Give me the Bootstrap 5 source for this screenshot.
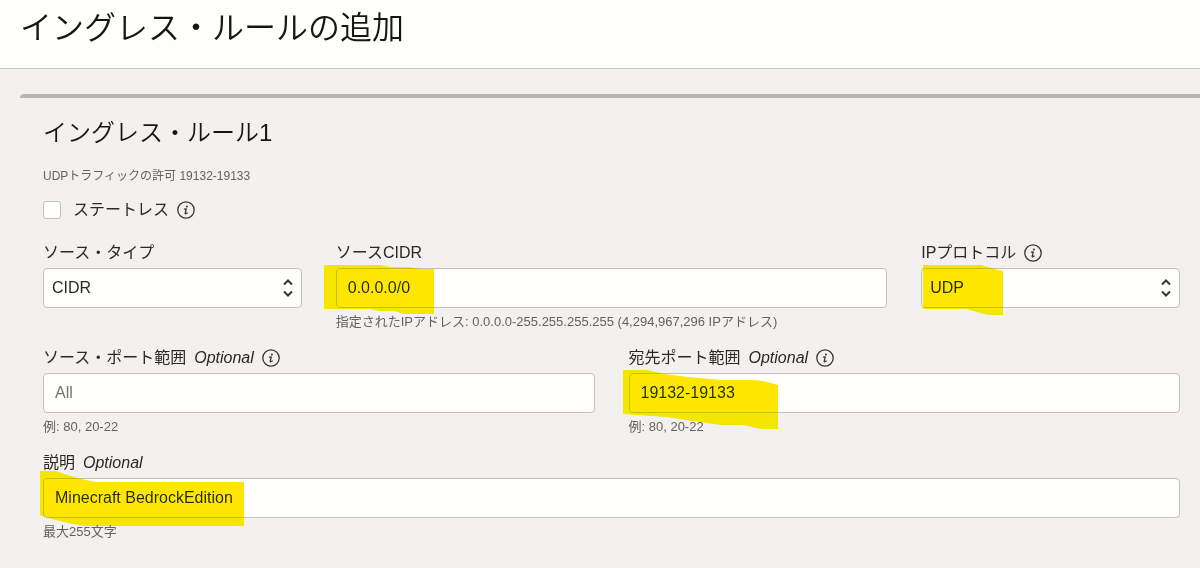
<!DOCTYPE html>
<html lang="ja">
<head>
<meta charset="utf-8">
<meta name="viewport" content="width=device-width, initial-scale=1">
<title>イングレス・ルールの追加</title>
<link href="https://cdn.jsdelivr.net/npm/bootstrap@5.3.0/dist/css/bootstrap.min.css" rel="stylesheet">
<style>
  body { font-family: "Liberation Sans", "Noto Sans CJK JP", sans-serif; font-size: 16px; line-height: 24px; color: #2b2825; background: #f3f1f0; overflow-x: hidden; }
  .page-head { background: #fefefc; border-bottom: 1px solid #c9c6c4; padding: 4px 20px 16px; }
  .page-head h1 { font-size: 32px; line-height: 48px; font-weight: 350; color: #161513; }
  .rule-panel { margin: 25px 0 0 20px; padding: 17px 20px 16px 23px; border-top: 4px solid #bab5b0; border-top-left-radius: 4px; }
  .rule-panel h2 { font-size: 24px; line-height: 36px; font-weight: 350; color: #161513; }
  .hint { font-size: 13px; line-height: 20px; color: #66615d; }
  .rule-summary { font-size: 12px; margin: 15px 0 12px; }
  .rule-row { --bs-gutter-x: 34px; }
  .field-block { margin-bottom: 14px; }
  .field-head { height: 24px; margin-bottom: 3px; }
  .field-block .hint { margin-top: 4px; }
  .optional { font-style: italic; margin-left: 8px; }
  .field-block .form-control, .field-block .form-select { height: 40px; font-size: 16px; line-height: 24px; color: #2b2825; background-color: #fefefc; border: 1px solid #c5c0bc; border-radius: 4px; padding: 7px 11px; }
  .field-block .form-select { padding-left: 8px; background-image: url("data:image/svg+xml,%3Csvg xmlns='http://www.w3.org/2000/svg' viewBox='0 0 12 18'%3E%3Cpath d='M2 5.5l4-4 4 4M2 12.5l4 4 4-4' fill='none' stroke='%233a3632' stroke-width='2'/%3E%3C/svg%3E"); background-size: 12px 18px; background-position: right 7px center; }
  .field-block .form-control::placeholder { color: #77726e; }
  .stateless { margin-bottom: 19px; }
  .stateless .form-check-input { width: 18px; height: 18px; margin: 0; border: 1px solid #c5c0bc; border-radius: 3px; background-color: #fefefc; }
  .info-btn { width: 18px; height: 18px; color: #3a3632; }
  .info-btn svg { display: block; }
  .marker { position: absolute; mix-blend-mode: darken; pointer-events: none; fill: #ffe600; }
  .marker-cidr { left: -12px; top: -3px; }
  .marker-protocol { left: 2px; top: -3px; }
  .marker-port { left: -6px; top: -3px; }
  .marker-note { left: -3px; top: -7px; }
</style>
</head>
<body>
<svg class="d-none" aria-hidden="true">
  <symbol id="info" viewBox="0 0 18 18">
    <circle cx="9" cy="9" r="8.2" fill="none" stroke="currentColor" stroke-width="1.3"/>
    <circle cx="9.9" cy="5.4" r="1" fill="currentColor"/>
    <path d="M7.5 8.2 9.3 7.8 8.2 12.2Q8.1 13 8.8 12.8L10.2 12" fill="none" stroke="currentColor" stroke-width="1.3" stroke-linecap="round" stroke-linejoin="round"/>
  </symbol>
</svg>
<header class="page-head"><h1 class="m-0">イングレス・ルールの追加</h1></header>
<main>
  <form class="rule-panel">
    <h2 class="m-0">イングレス・ルール1</h2>
    <p class="hint rule-summary">UDPトラフィックの許可 19132-19133</p>
    <div class="stateless d-flex align-items-center">
      <input class="form-check-input" type="checkbox" id="stateless">
      <label class="ms-2 ps-1" for="stateless">ステートレス</label>
      <button type="button" class="info-btn btn p-0 border-0 ms-2" aria-label="ステートレスの情報"><svg width="18" height="18"><use href="#info"/></svg></button>
    </div>
    <div class="rule-row row">
      <div class="field-block col-3">
        <div class="field-head d-flex align-items-center"><label for="type">ソース・タイプ</label></div>
        <select class="form-select" id="type"><option>CIDR</option></select>
      </div>
      <div class="field-block col-6">
        <div class="field-head d-flex align-items-center"><label for="cidr">ソースCIDR</label></div>
        <div class="position-relative">
          <input class="form-control" id="cidr" type="text" value="0.0.0.0/0">
          <svg class="marker marker-cidr" width="110" height="49" aria-hidden="true"><path d="M0 0H56L66 2H84L96 4H110V49H80L70 46H56L46 44H0Z"/></svg>
        </div>
        <div class="hint">指定されたIPアドレス: 0.0.0.0-255.255.255.255 (4,294,967,296 IPアドレス)</div>
      </div>
      <div class="field-block col-3">
        <div class="field-head d-flex align-items-center"><label for="protocol">IPプロトコル</label><button type="button" class="info-btn btn p-0 border-0 ms-2" aria-label="IPプロトコルの情報"><svg width="18" height="18"><use href="#info"/></svg></button></div>
        <div class="position-relative">
          <select class="form-select" id="protocol"><option>UDP</option></select>
          <svg class="marker marker-protocol" width="80" height="50" aria-hidden="true"><path d="M0 0H58L72 4 80 6V50H66Q56 48 44 44H0Z"/></svg>
        </div>
      </div>
      <div class="field-block col-6">
        <div class="field-head d-flex align-items-center"><label for="source-port">ソース・ポート範囲<span class="optional">Optional</span></label><button type="button" class="info-btn btn p-0 border-0 ms-2" aria-label="ソース・ポート範囲の情報"><svg width="18" height="18"><use href="#info"/></svg></button></div>
        <input class="form-control" id="source-port" type="text" placeholder="All">
        <div class="hint">例: 80, 20-22</div>
      </div>
      <div class="field-block col-6">
        <div class="field-head d-flex align-items-center"><label for="target-port">宛先ポート範囲<span class="optional">Optional</span></label><button type="button" class="info-btn btn p-0 border-0 ms-2" aria-label="宛先ポート範囲の情報"><svg width="18" height="18"><use href="#info"/></svg></button></div>
        <div class="position-relative">
          <input class="form-control" id="target-port" type="text" value="19132-19133">
          <svg class="marker marker-port" width="155" height="59" aria-hidden="true"><path d="M0 0H24Q48 6 76 8L100 10H128Q140 10 155 15V59H138L120 55H98Q68 51 44 47L0 44Z"/></svg>
        </div>
        <div class="hint">例: 80, 20-22</div>
      </div>
      <div class="field-block col-12">
        <div class="field-head d-flex align-items-center"><label for="note">説明<span class="optional">Optional</span></label></div>
        <div class="position-relative">
          <input class="form-control" id="note" type="text" value="Minecraft BedrockEdition">
          <svg class="marker marker-note" width="204" height="55" aria-hidden="true"><path d="M0 0H16Q34 7 56 11H204V55H46Q22 52 0 44Z"/></svg>
        </div>
        <div class="hint">最大255文字</div>
      </div>
    </div>
  </form>
</main>
<script src="https://cdn.jsdelivr.net/npm/bootstrap@5.3.0/dist/js/bootstrap.bundle.min.js"></script>
</body>
</html>
